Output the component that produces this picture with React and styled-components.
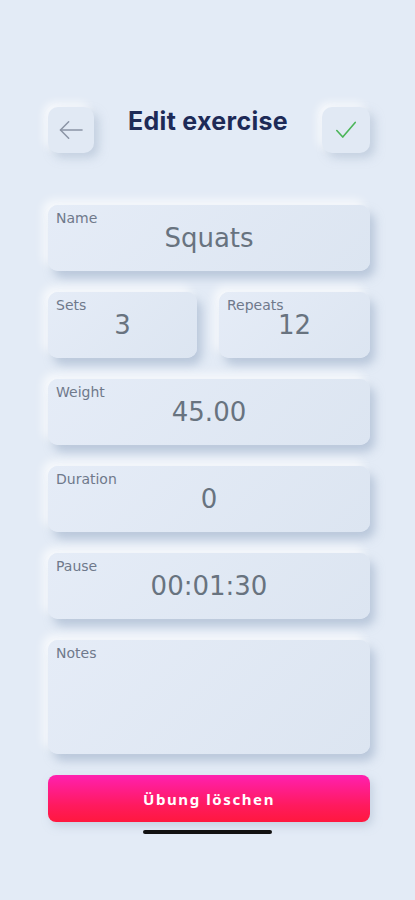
import React from "react";
import styled, { createGlobalStyle } from "styled-components";

const GlobalStyle = createGlobalStyle`
  * { box-sizing: border-box; }
  html, body {
    margin: 0;
    padding: 0;
    background: #e3ebf6;
    font-family: "DejaVu Sans", "Noto Sans", sans-serif;
  }
`;

const Screen = styled.div`
  width: 415px;
  min-height: 900px;
  background: #e3ebf6;
  padding: 107px 45px 0 48px;
  display: flex;
  flex-direction: column;
`;

const Header = styled.div`
  display: flex;
  align-items: center;
  justify-content: space-between;
  height: 46px;
`;

const IconButton = styled.button`
  width: ${(p) => p.$w || 46}px;
  height: 46px;
  border: none;
  border-radius: 10px;
  background: #e1e9f4;
  box-shadow: 5px 5px 10px rgba(170, 185, 206, 0.55),
    -4px -4px 8px rgba(255, 255, 255, 0.8);
  display: flex;
  align-items: center;
  justify-content: center;
  padding: 0;
`;

const Title = styled.h1`
  margin: 0 0 18px;
  font-family: "Inter", "Liberation Sans", sans-serif;
  font-size: 25px;
  line-height: 30px;
  font-weight: 700;
  color: #1d2a57;
  letter-spacing: 0.3px;
`;

const Form = styled.div`
  margin-top: 52px;
  display: flex;
  flex-direction: column;
  gap: 21px;
`;

const Row = styled.div`
  display: grid;
  grid-template-columns: 149px 1fr;
  gap: 22px;
`;

const Field = styled.div`
  height: ${(p) => p.$h || 66}px;
  border-radius: 10px;
  background: linear-gradient(135deg, #e5ecf7 0%, #dce5f1 100%);
  box-shadow: 5px 7px 10px rgba(160, 177, 202, 0.62),
    -5px -5px 10px rgba(255, 255, 255, 0.75);
  padding: 4px 8px 0;
  display: flex;
  flex-direction: column;
`;

const Label = styled.div`
  font-size: 14px;
  line-height: 18px;
  color: #6f798b;
`;

const Value = styled.div`
  text-align: center;
  font-size: 26px;
  line-height: 28px;
  color: #68737f;
  margin-top: -3px;
`;

const DeleteButton = styled.button`
  margin-top: 21px;
  height: 47px;
  width: 100%;
  border: none;
  border-radius: 8px;
  background: linear-gradient(180deg, #ff20b0 0%, #ff1a5e 65%, #ff183e 100%);
  box-shadow: 3px 4px 8px rgba(170, 185, 206, 0.5);
  color: #ffffff;
  font-family: "Noto Sans", "Liberation Sans", sans-serif;
  font-size: 15px;
  font-weight: 700;
  letter-spacing: 1.6px;
`;

const HomeBar = styled.div`
  align-self: center;
  margin: 8px 0 0 -3px;
  width: 129px;
  height: 4px;
  border-radius: 2px;
  background: #111;
`;

const ArrowLeft = () => (
  <svg width="28" height="28" viewBox="0 0 24 24" fill="none" stroke="#8b94a5" strokeWidth="1.3" strokeLinecap="round" strokeLinejoin="round">
    <path d="M21.5 12H3" />
    <path d="M10 5l-7 7 7 7" />
  </svg>
);

const Check = () => (
  <svg width="26" height="26" viewBox="0 0 24 24" fill="none" stroke="#4bb558" strokeWidth="1.5" strokeLinecap="round" strokeLinejoin="round">
    <path d="M3.5 12.5l5.5 6L20.5 5" />
  </svg>
);

export default function App() {
  return (
    <>
      <GlobalStyle />
      <Screen>
        <Header>
          <IconButton aria-label="back">
            <ArrowLeft />
          </IconButton>
          <Title>Edit exercise</Title>
          <IconButton $w={48} aria-label="save">
            <Check />
          </IconButton>
        </Header>

        <Form>
          <Field>
            <Label>Name</Label>
            <Value>Squats</Value>
          </Field>
          <Row>
            <Field>
              <Label>Sets</Label>
              <Value>3</Value>
            </Field>
            <Field>
              <Label>Repeats</Label>
              <Value>12</Value>
            </Field>
          </Row>
          <Field>
            <Label>Weight</Label>
            <Value>45.00</Value>
          </Field>
          <Field>
            <Label>Duration</Label>
            <Value>0</Value>
          </Field>
          <Field>
            <Label>Pause</Label>
            <Value>00:01:30</Value>
          </Field>
          <Field $h={114}>
            <Label>Notes</Label>
          </Field>
        </Form>

        <DeleteButton>Übung löschen</DeleteButton>
        <HomeBar />
      </Screen>
    </>
  );
}
